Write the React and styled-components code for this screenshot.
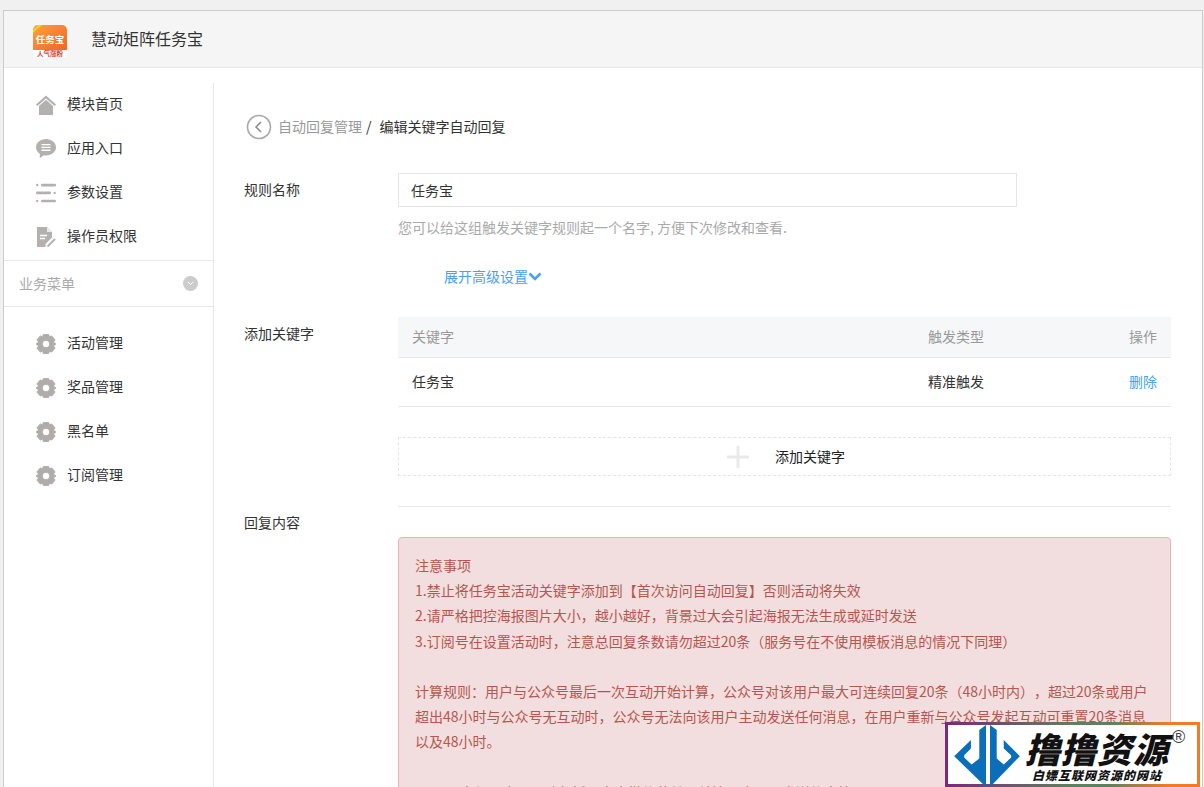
import React from 'react';
import styled, { createGlobalStyle } from 'styled-components';

const GlobalStyle = createGlobalStyle`
  html, body {
    margin: 0;
    padding: 0;
    height: 787px;
    overflow: hidden;
    background: #f0f0f0;
    font-family: "Noto Sans CJK SC", "Liberation Sans", sans-serif;
    font-size: 14px;
    color: #333;
    text-spacing-trim: space-all;
  }
  * { box-sizing: border-box; }
`;

const Page = styled.div`
  position: relative;
  height: 787px;
  padding: 10px 1px 0 3px;
  overflow: hidden;
`;

const Frame = styled.div`
  height: 777px;
  background: #fff;
  border: 1px solid #ccc;
  border-bottom: 0;
  overflow: hidden;
`;

const Header = styled.header`
  display: flex;
  align-items: center;
  height: 57px;
  padding: 5px 0 0 29px;
  background: #f5f5f5;
  border-bottom: 1px solid #e7e7e7;
`;

const Brand = styled.span`
  margin: -7px 0 0 24px;
  font-size: 16px;
  color: #333;
`;

const Body = styled.div`
  display: flex;
  padding-top: 15px;
`;

const Sidebar = styled.aside`
  flex: none;
  width: 210px;
  height: 705px;
  border-right: 1px solid #e7e7e7;
`;

const Menu = styled.ul`
  list-style: none;
  margin: ${p => p.$shift}px 0 0;
  padding: ${p => p.$top}px 0 0 32px;
`;

const MenuItem = styled.li`
  display: flex;
  align-items: center;
  height: 44px;
  color: #333;
  svg { flex: none; width: 20px; height: 20px; margin: 2px 11px 0 0; }
  span { margin-bottom: 3px; }
`;

const GroupTitle = styled.div`
  display: flex;
  align-items: center;
  justify-content: space-between;
  height: 47px;
  margin-top: 2px;
  padding: 0 15px;
  border-top: 1px solid #e7e7e7;
  border-bottom: 1px solid #e7e7e7;
  color: #aaa;
  em { font-style: normal; margin-bottom: 2px; }
`;

const GroupToggle = styled.span`
  display: flex;
  align-items: center;
  justify-content: center;
  width: 15px;
  height: 15px;
  border-radius: 50%;
  background: #ccc;
`;

const Main = styled.main`
  flex: 1;
  padding: 30px 31px 0 30px;
`;

const Crumbs = styled.div`
  display: flex;
  align-items: center;
  height: 26px;
  margin-left: 2px;
  margin-bottom: 34px;
`;

const CrumbLink = styled.span`
  margin-left: 6px;
  color: #999;
`;

const CrumbSlash = styled.span`
  margin: 0 8px 0 4px;
  color: #333;
`;

const FormRow = styled.div`
  display: flex;
`;

const Label = styled.label`
  flex: none;
  width: 154px;
  padding-top: ${p => p.$top}px;
  color: #333;
`;

const Field = styled.div`
  flex: 1;
  min-width: 0;
  padding-top: ${p => p.$top || 0}px;
`;

const NameInput = styled.input`
  display: block;
  width: 619px;
  height: 34px;
  padding: 0 12px;
  border: 1px solid #e5e5e5;
  outline: none;
  font: inherit;
  color: #333;
  background: #fff;
`;

const Hint = styled.p`
  margin: 10px 0 0;
  line-height: 20px;
  color: #aaa;
  font-size: 14px;
`;

const Advanced = styled.a`
  display: flex;
  align-items: center;
  height: 20px;
  margin: 29px 0 31px 46px;
  color: #4a9ff0;
`;

const Table = styled.table`
  width: 100%;
  border-collapse: separate;
  border-spacing: 0;
  table-layout: fixed;
`;

const Th = styled.th`
  height: 41px;
  padding: 0 14px 2px;
  background: #f5f7f9;
  border-bottom: 1px solid #e7e7ec;
  font-weight: 400;
  color: #999;
  text-align: ${p => p.$align || 'left'};
`;

const Td = styled.td`
  height: 49px;
  padding: 0 14px 2px;
  border-bottom: 1px solid #e7e7ec;
  color: #333;
  text-align: ${p => p.$align || 'left'};
`;

const DeleteLink = styled.a`
  color: #4a9ff0;
`;

const AddKeyword = styled.div`
  display: flex;
  align-items: center;
  justify-content: center;
  gap: 26px;
  height: 39px;
  margin-top: 30px;
  padding-left: 3px;
  border: 1px dashed #e5e5e5;
  font-size: 14px;
  color: #222;
  span { margin-bottom: 2px; }
`;

const Rule = styled.hr`
  height: 1px;
  margin: 30px 0 0;
  border: 0;
  background: #e7e7ec;
`;

const Alert = styled.div`
  padding: 15px 16px;
  background: #f2dede;
  border: 1px solid #efb0b0;
  border-radius: 4px;
  color: #b5574f;
  line-height: 25.2px;
  font-size: 14px;
  p { margin: 0; min-height: 25.2px; }
`;

const Watermark = styled.div`
  position: absolute;
  right: 4px;
  bottom: 0;
  display: flex;
  align-items: flex-start;
  width: 255px;
  height: 65px;
  padding: 0 0 0 6px;
  background: #fff;
  border: 3px solid;
  border-image: linear-gradient(90deg, #7a2a78, #5f7f5f 50%, #5f7f5f 65%, #f57a26 88%) 1;
`;

const WatermarkText = styled.div`
  display: flex;
  flex-direction: column;
  align-items: center;
  margin: 4px 0 0 5px;
  color: #111;
`;

const WatermarkTitle = styled.div`
  font-size: 35px;
  font-weight: 900;
  font-style: italic;
  line-height: 38px;
  letter-spacing: 1px;
  white-space: nowrap;
`;

const WatermarkSub = styled.div`
  font-size: 12px;
  font-weight: 900;
  font-style: italic;
  line-height: 14px;
  letter-spacing: 1px;
  margin-top: 1px;
  white-space: nowrap;
`;

const Registered = styled.span`
  margin: 2px 0 0 3px;
  font-family: "Liberation Sans", sans-serif;
  font-size: 18px;
  line-height: 20px;
  color: #444;
`;

const HomeIcon = () => (
  <svg viewBox="0 0 20 20">
    <path d="M10 0.5 L20 9.5 L18.6 11 L10 3.4 L1.4 11 L0 9.5 Z" fill="#b4b0b0" />
    <path d="M10 4.8 L17 11 V20 H3 V11 Z" fill="#b4b0b0" />
  </svg>
);

const ChatIcon = () => (
  <svg viewBox="0 0 20 20">
    <path d="M10 0 C15.5 0 20 3.6 20 8.3 C20 12.8 15.6 16.4 10 16.4 C9.2 16.4 8.4 16.3 7.7 16.2 L3.8 19.2 L3.9 14.9 C1.5 13.4 0 11 0 8.3 C0 3.6 4.5 0 10 0 Z" fill="#b4b0b0" />
    <path d="M5.5 5.6 H14.5 M5.5 8.4 H14.5 M5.5 11.2 H14.5" stroke="#fff" strokeWidth="1.4" />
  </svg>
);

const ListIcon = () => (
  <svg viewBox="0 0 20 20">
    <g fill="#b4b0b0">
      <circle cx="1.2" cy="2" r="1.2" />
      <rect x="5" y="0.8" width="15" height="2.6" rx="1.2" />
      <rect x="0" y="8.6" width="15" height="2.6" rx="1.2" />
      <circle cx="18.6" cy="9.9" r="1.2" />
      <circle cx="1.2" cy="18" r="1.2" />
      <rect x="5" y="16.7" width="15" height="2.6" rx="1.2" />
    </g>
  </svg>
);

const DocIcon = () => (
  <svg viewBox="0 0 20 20">
    <path d="M1 0 H11 L16 5 V10.5 L9.5 17 V20 H1 Z" fill="#b4b0b0" />
    <path d="M11 0 V5 H16" fill="#fff" opacity=".7" />
    <path d="M4 8.5 H11 M4 11.5 H9" stroke="#fff" strokeWidth="1.4" />
    <path d="M11.5 19.5 L19 12" stroke="#b4b0b0" strokeWidth="2" />
  </svg>
);

const GearIcon = () => (
  <svg viewBox="0 0 20 20">
    <path
      fill="#b0acac"
      fillRule="evenodd"
      d="M7.4 0.4 H12.6 L13.4 2.9 L15.7 1.9 L19.1 6 L17.3 8 L19.9 10 L17.3 12 L19.1 14 L15.7 18.1 L13.4 17.1 L12.6 19.6 H7.4 L6.6 17.1 L4.3 18.1 L0.9 14 L2.7 12 L0.1 10 L2.7 8 L0.9 6 L4.3 1.9 L6.6 2.9 Z M10 6.2 A3.8 3.8 0 1 0 10 13.8 A3.8 3.8 0 1 0 10 6.2 Z"
      stroke="#b0acac"
      strokeLinejoin="round"
    />
  </svg>
);

const AppLogo = () => (
  <svg width="34" height="33" viewBox="0 0 34 33">
    <defs>
      <linearGradient id="logoBg" x1="0" y1="0" x2="1" y2="1">
        <stop offset="0" stopColor="#f9a23c" />
        <stop offset="1" stopColor="#f4632a" />
      </linearGradient>
    </defs>
    <path d="M5 0 H29 A5 5 0 0 1 34 5 V25 H0 V5 A5 5 0 0 1 5 0 Z" fill="url(#logoBg)" />
    <path d="M0 25 H34 V28 A5 5 0 0 1 29 33 H5 A5 5 0 0 1 0 28 Z" fill="#fff" />
    <path d="M0 5 L5 0 H9 L0 8 Z" fill="#f5d020" />
    <text x="17" y="18" textAnchor="middle" fontSize="9.5" fontWeight="700" fill="#fff" fontFamily="Noto Sans CJK SC, sans-serif">任务宝</text>
    <text x="17" y="31" textAnchor="middle" fontSize="6.5" fontWeight="700" fill="#e2402c" fontFamily="Noto Sans CJK SC, sans-serif">人气涨粉</text>
  </svg>
);

const BackIcon = () => (
  <svg width="26" height="26" viewBox="0 0 26 26" style={{ marginTop: 2 }}>
    <circle cx="13" cy="13" r="11.5" fill="none" stroke="#a8a8a8" strokeWidth="1.6" />
    <path d="M15 8 L10 13 L15 18" fill="none" stroke="#888" strokeWidth="1.5" />
  </svg>
);

const Chevron = () => (
  <svg width="14" height="9" viewBox="0 0 14 9">
    <path d="M1.5 1.5 L7 7 L12.5 1.5" fill="none" stroke="#4a9ff0" strokeWidth="2.6" />
  </svg>
);

const PlusIcon = () => (
  <svg width="22" height="22" viewBox="0 0 22 22">
    <path d="M11 0 V22 M0 11 H22" stroke="#e9e9eb" strokeWidth="3" />
  </svg>
);

const WatermarkLogo = () => (
  <svg width="66" height="62" viewBox="30 10 196 185" style={{ flex: 'none' }}>
    <path d="M125 10 V195 L30 103 L80 55 V80 L60 100 V107 L82 128 L105 110 V25 Z" fill="#0b6eb8" />
    <path d="M137 10 V195 L226 103 L178 55 V80 L200 100 V107 L178 128 L157 110 V25 Z" fill="#0b6eb8" />
  </svg>
);

const topMenu = [
  ['模块首页', HomeIcon],
  ['应用入口', ChatIcon],
  ['参数设置', ListIcon],
  ['操作员权限', DocIcon],
];

const bizMenu = ['活动管理', '奖品管理', '黑名单', '订阅管理'];

const notes = [
  '注意事项',
  '1.禁止将任务宝活动关键字添加到【首次访问自动回复】否则活动将失效',
  '2.请严格把控海报图片大小，越小越好，背景过大会引起海报无法生成或延时发送',
  '3.订阅号在设置活动时，注意总回复条数请勿超过20条（服务号在不使用模板消息的情况下同理）',
  '',
  '计算规则：用户与公众号最后一次互动开始计算，公众号对该用户最大可连续回复20条（48小时内），超过20条或用户超出48小时与公众号无互动时，公众号无法向该用户主动发送任何消息，在用户重新与公众号发起互动可重置20条消息以及48小时。',
  '',
  'PS：用户与公众号互动包括：点击微信菜单、关注公众号、发送信息等',
];

export default function App() {
  return (
    <Page>
      <GlobalStyle />
      <Frame>
        <Header>
          <AppLogo />
          <Brand>慧动矩阵任务宝</Brand>
        </Header>
        <Body>
          <Sidebar>
            <Menu $top={0} $shift={-1}>
              {topMenu.map(([label, Icon]) => (
                <MenuItem key={label}><Icon /><span>{label}</span></MenuItem>
              ))}
            </Menu>
            <GroupTitle>
              <em>业务菜单</em>
              <GroupToggle>
                <svg width="7" height="5" viewBox="0 0 7 5">
                  <path d="M1 1 L3.5 3.5 L6 1" fill="none" stroke="#fff" strokeWidth="1" />
                </svg>
              </GroupToggle>
            </GroupTitle>
            <Menu $top={14} $shift={0}>
              {bizMenu.map(label => (
                <MenuItem key={label}><GearIcon /><span>{label}</span></MenuItem>
              ))}
            </Menu>
          </Sidebar>
          <Main>
            <Crumbs>
              <BackIcon />
              <CrumbLink>自动回复管理</CrumbLink>
              <CrumbSlash>/</CrumbSlash>
              <span>编辑关键字自动回复</span>
            </Crumbs>
            <FormRow>
              <Label $top={6}>规则名称</Label>
              <Field>
                <NameInput defaultValue="任务宝" />
                <Hint>您可以给这组触发关键字规则起一个名字, 方便下次修改和查看.</Hint>
                <Advanced>展开高级设置<Chevron /></Advanced>
              </Field>
            </FormRow>
            <FormRow>
              <Label $top={6}>添加关键字</Label>
              <Field>
                <Table>
                  <colgroup>
                    <col />
                    <col width="84" />
                    <col width="173" />
                  </colgroup>
                  <thead>
                    <tr>
                      <Th>关键字</Th>
                      <Th>触发类型</Th>
                      <Th $align="right">操作</Th>
                    </tr>
                  </thead>
                  <tbody>
                    <tr>
                      <Td>任务宝</Td>
                      <Td>精准触发</Td>
                      <Td $align="right"><DeleteLink>删除</DeleteLink></Td>
                    </tr>
                  </tbody>
                </Table>
                <AddKeyword><PlusIcon /><span>添加关键字</span></AddKeyword>
                <Rule />
              </Field>
            </FormRow>
            <FormRow>
              <Label $top={5}>回复内容</Label>
              <Field $top={30}>
                <Alert>
                  {notes.map((line, i) => <p key={i}>{line}</p>)}
                </Alert>
              </Field>
            </FormRow>
          </Main>
        </Body>
      </Frame>
      <Watermark>
        <WatermarkLogo />
        <WatermarkText>
          <WatermarkTitle>撸撸资源</WatermarkTitle>
          <WatermarkSub>白嫖互联网资源的网站</WatermarkSub>
        </WatermarkText>
        <Registered>®</Registered>
      </Watermark>
    </Page>
  );
}
